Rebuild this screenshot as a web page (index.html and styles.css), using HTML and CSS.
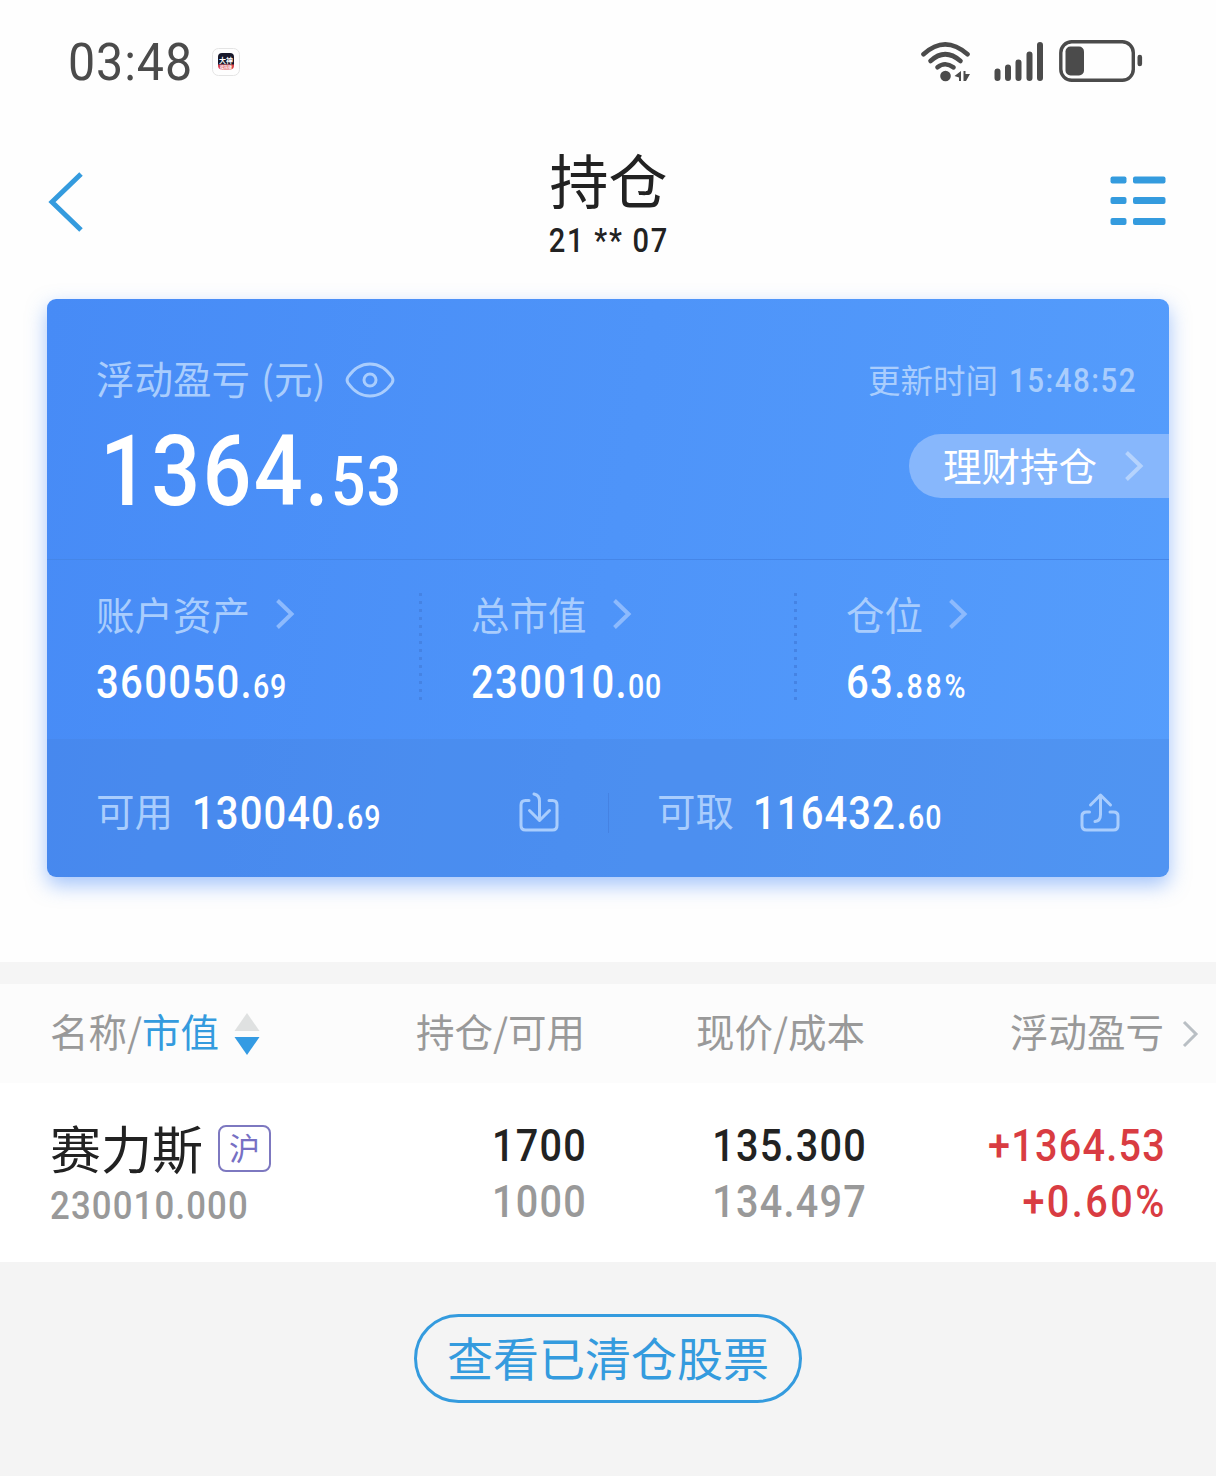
FILE: index.html
```html
<!DOCTYPE html>
<html lang="zh-CN">
<head>
<meta charset="UTF-8">
<title>持仓</title>
<link rel="stylesheet" href="styles.css">
</head>
<body>
	<div class="statusbar">
		<span class="time num">03:48</span>
		<svg class="app-icon" width="28" height="28" viewBox="0 0 28 28">
			<rect x="0.5" y="0.5" width="27" height="27" rx="6" fill="#fefefe" stroke="#e4e4e4"/>
			<path d="M6 17V9q0-4 4-4h8q4 0 4 4v8z" fill="#17182b"/>
			<path d="M6 16.500h16v1q0 4-4 4h-8q-4 0-4-4z" fill="#d8404c"/>
			<text x="14" y="14.500" class="app-name">大神</text>
			<text x="14" y="20.500" class="app-tag">模拟版</text>
		</svg>
		<svg class="wifi" width="52" height="42" viewBox="0 0 52 42">
			<g fill="none" stroke="#4b4b4b" stroke-width="4.600" stroke-linecap="round">
				<path d="M3.500 13.300Q25 -6.500 47.500 13.300"/>
				<path d="M10.500 20Q25 6.500 40.500 20"/>
				<path d="M17.500 26.300Q25 20.200 33.500 26.300"/>
			</g>
			<circle cx="25.500" cy="35" r="5.300" fill="#4b4b4b"/>
			<path d="M41 30v10h-2v-3.500l-4.500-1.500zM43.500 30h2v3h4.500l-4 7h-2.500z" fill="#4b4b4b"/>
		</svg>
		<svg class="signal" width="50" height="40" viewBox="0 0 50 40">
			<g stroke="#4b4b4b" stroke-width="6" stroke-linecap="round">
				<path d="M3.500 29.500v6.500M14 25.500V36M24.500 20.500V36M35.500 12.500V36M46 3v33"/>
			</g>
		</svg>
		<svg class="battery" width="84" height="44" viewBox="0 0 84 44">
			<rect x="1.800" y="1.800" width="72.500" height="38.500" rx="11" fill="none" stroke="#4b4b4b" stroke-width="3.400"/>
			<rect x="6.500" y="6.500" width="18.500" height="29" rx="5" fill="#4b4b4b"/>
			<path d="M80.800 17v7" stroke="#4b4b4b" stroke-width="4.600" stroke-linecap="round"/>
		</svg>
	</div>

	<div class="header">
		<svg class="back" width="38" height="62" viewBox="0 0 38 62">
			<path d="M34 3L5 31l29 28" fill="none" stroke="#349bde" stroke-width="5"/>
		</svg>
		<div class="title">
			<div class="title-main">持仓</div>
			<div class="title-sub num">21 ** 07</div>
		</div>
		<svg class="list" width="56" height="50" viewBox="0 0 56 50" fill="#349bde">
			<rect x="0.500" y="0.500" width="16" height="7" rx="2"/>
			<rect x="23" y="0.500" width="32.500" height="7" rx="2"/>
			<rect x="0.500" y="21" width="16" height="7" rx="2"/>
			<rect x="23" y="21" width="32.500" height="7" rx="2"/>
			<rect x="0.500" y="42" width="16" height="7" rx="2"/>
			<rect x="23" y="42" width="32.500" height="7" rx="2"/>
		</svg>
	</div>

	<div class="card">
		<div class="profit">
			<div class="profit-head">
				<span class="label">浮动盈亏<span class="unit">(元)</span></span>
				<svg class="eye" width="50" height="38" viewBox="0 0 50 38" fill="none" stroke="currentColor" stroke-width="3">
					<path d="M3 22Q1.200 19 3 16Q12 3 25 3T47 16Q48.800 19 47 22Q38 35 25 35T3 22z"/>
					<circle cx="25" cy="19" r="6"/>
				</svg>
				<span class="update">更新时间</span>
				<span class="clock num">15:48:52</span>
			</div>
			<div class="profit-body">
				<div class="total num">1364.<small>53</small></div>
				<div class="wealth">理财持仓
					<svg class="arrow" width="20" height="32" viewBox="0 0 20 32"><path d="M2.500 2.500L16.500 16l-14 13.500"/></svg>
				</div>
			</div>
		</div>
		<div class="assets">
			<div class="asset">
				<div class="label">账户资产<svg class="arrow" width="20" height="32" viewBox="0 0 20 32"><path d="M2.500 2.500L16.500 16l-14 13.500"/></svg></div>
				<div class="amount num">360050.<small>69</small></div>
			</div>
			<div class="asset">
				<div class="label">总市值<svg class="arrow" width="20" height="32" viewBox="0 0 20 32"><path d="M2.500 2.500L16.500 16l-14 13.500"/></svg></div>
				<div class="amount num">230010.<small>00</small></div>
			</div>
			<div class="asset">
				<div class="label">仓位<svg class="arrow" width="20" height="32" viewBox="0 0 20 32"><path d="M2.500 2.500L16.500 16l-14 13.500"/></svg></div>
				<div class="amount num">63.<small class="percent">88%</small></div>
			</div>
		</div>
		<div class="cash">
			<div class="cash-item">
				<span class="label">可用</span>
				<span class="amount num">130040.<small>69</small></span>
				<svg class="transfer" width="40" height="40" viewBox="0 0 40 40">
					<path d="M10 8.500H6.500Q2 8.500 2 13v20.500Q2 38 6.500 38h27q4.500 0 4.500-4.500V13q0-4.500-4.500-4.500H30"/>
					<path d="M15 2q5.500 1 5.500 7v19M10.500 18.500l10 10 10-10"/>
				</svg>
			</div>
			<div class="cash-item">
				<span class="label">可取</span>
				<span class="amount num">116432.<small>60</small></span>
				<svg class="transfer" width="40" height="40" viewBox="0 0 40 40">
					<path d="M9.500 20H6.500Q2 20 2 24v9.500Q2 38 6.500 38h27q4.500 0 4.500-4.500V24q0-4-4.500-4H30"/>
					<path d="M15 29.500q5.500-.5 5.500-7V3M10.500 13l10-10 10 10"/>
				</svg>
			</div>
		</div>
	</div>

	<div class="stocks">
		<div class="row row-head">
			<div class="col-name">名称/<span class="active">市值</span>
				<svg class="sort" width="26" height="42" viewBox="0 0 26 42">
					<path d="M13 0l12.500 18H.5z" fill="#dfe1e1"/>
					<path d="M13 42L.5 24h25z" fill="#349be3"/>
				</svg>
			</div>
			<div>持仓/可用</div>
			<div>现价/成本</div>
			<div>浮动盈亏</div>
			<svg class="more" width="18" height="28" viewBox="0 0 18 28"><path d="M2 2l12 12L2 26" fill="none" stroke="#b9bfc4" stroke-width="3"/></svg>
		</div>
		<div class="row row-stock">
			<div class="col-name">
				<div class="stock-name">赛力斯<span class="market">沪</span></div>
				<div class="stock-value num">230010.000</div>
			</div>
			<div class="pair num">1700<br><span class="sub">1000</span></div>
			<div class="pair num">135.300<br><span class="sub">134.497</span></div>
			<div class="pair num up">+1364.53<br><span class="percent">+0.60%</span></div>
		</div>
	</div>

	<div class="footer">
		<div class="cleared">查看已清仓股票</div>
	</div>
</body>
</html>
```
FILE: styles.css
```css
*{
	box-sizing: border-box;
}

body{
	margin: 0;
	width: 1216px;
	min-height: 1476px;
	background: #fefefe;
	color: #222;
	font-family: "Noto Sans CJK SC", sans-serif;
	display: flex;
	flex-direction: column;
}

svg{
	display: block;
	flex: none;
}

/* narrow digits */
.num{
	font-family: Roboto, "Noto Sans CJK SC", sans-serif;
	font-weight: 500;
	letter-spacing: 0.03em;
	white-space: nowrap;
	transform: scaleX(0.88);
	transform-origin: 0 50%;
}

/* status bar */
.statusbar{
	height: 124px;
	padding: 0 73px 0 68px;
	display: flex;
	align-items: center;
}

.time{
	width: 122px;
	padding-top: 1px;
	font-size: 52px;
	font-weight: 400;
	line-height: 60px;
	color: #4b4b4b;
	letter-spacing: 1px;
	transform: scaleX(0.93);
}

.app-icon{
	margin-left: 22px;
}

.app-name, .app-tag{
	fill: #fff;
	font-size: 7px;
	font-weight: 700;
	text-anchor: middle;
}

.app-tag{
	font-size: 4px;
}

.wifi{
	margin-left: auto;
}

.signal{
	margin-left: 22px;
}

.battery{
	margin-left: 15px;
}

/* page header */
.header{
	height: 175px;
	padding: 0 50px 0 47px;
	display: flex;
	justify-content: space-between;
}

.back{
	margin-top: 47px;
}

.title{
	width: 160px;
	margin-left: 22px;
	padding-top: 21px;
	text-align: center;
}

.title-main{
	font-size: 59px;
	line-height: 68px;
}

.title-sub{
	margin-top: 8px;
	font-size: 33px;
	line-height: 40px;
	letter-spacing: 2px;
	transform-origin: 50% 50%;
}

.list{
	margin-top: 52px;
}

/* blue card */
.card{
	height: 578px;
	margin: 0 47px;
	border-radius: 9px;
	overflow: hidden;
	background: linear-gradient(100deg, #478bf6, #559dfc);
	box-shadow: 0 8px 20px rgba(74, 140, 250, 0.5);
	color: #fff;
}

.label{
	color: #a9cdfd;
	font-size: 38.500px;
	line-height: 50px;
}

.arrow{
	fill: none;
	stroke: #8dbafd;
	stroke-width: 4;
}

.profit{
	height: 260px;
	padding: 54px 0 0 49px;
}

.profit-head{
	height: 54px;
	display: flex;
	align-items: center;
	color: #a9cdfd;
}

.profit-head .label{
	margin-top: -6px;
}

.unit{
	margin-left: 11px;
}

.eye{
	margin-left: 19px;
}

.update{
	margin: -2px 0 0 auto;
	font-size: 32.500px;
	line-height: 40px;
}

.clock{
	width: 126px;
	margin: 0 34px 0 11px;
	font-size: 33.500px;
	letter-spacing: 1.700px;
}

.profit-body{
	display: flex;
	justify-content: space-between;
}

.total{
	margin: 10px 0 0 4px;
	font-size: 98px;
	line-height: 110px;
	letter-spacing: 2.500px;
}

.total small{
	font-size: 69px;
	letter-spacing: 1.500px;
}

.wealth{
	width: 260px;
	height: 64px;
	margin-top: 27px;
	padding: 0 25px 5px 34px;
	border-radius: 32px 0 0 32px;
	background: #87b7fc;
	display: flex;
	align-items: center;
	justify-content: space-between;
	font-size: 38.500px;
}

.wealth .arrow{
	margin-top: 4px;
	stroke: #b5d3fd;
}

.assets{
	height: 180px;
	border-top: 1px solid #4586e8;
	display: grid;
	grid-template-columns: repeat(3, 375px);
}

.asset{
	padding: 28px 0 0 49px;
}

.asset .label{
	display: flex;
	align-items: center;
}

.asset .arrow{
	margin: 2px 0 0 25px;
}

.asset + .asset{
	position: relative;
}

/* dotted divider between the columns */
.asset + .asset::before{
	content: "";
	position: absolute;
	left: -3px;
	top: 33px;
	width: 3px;
	height: 112px;
	background: repeating-linear-gradient(#4583e4 0 3px, transparent 3px 8px);
}

.amount{
	font-size: 45.500px;
	line-height: 54px;
	letter-spacing: 1.500px;
}

.amount small{
	font-size: 32.500px;
	letter-spacing: 1px;
}

.amount .percent{
	letter-spacing: 3px;
}

.asset .amount{
	margin-top: 18px;
}

.cash{
	height: 138px;
	padding-top: 42px;
	background: rgba(70, 130, 220, 0.3);
	display: grid;
	grid-template-columns: 561px 561px;
}

.cash-item{
	height: 60px;
	padding: 0 49px;
	display: flex;
	align-items: center;
}

.cash-item + .cash-item{
	background: linear-gradient(#4582e2, #4582e2) 0 12px / 1px 40px no-repeat;
}

.cash-item .label{
	margin-top: -4px;
}

.cash-item .amount{
	margin-left: 19px;
	padding-top: 9px;
	letter-spacing: 1.200px;
}

.transfer{
	margin: 2px 0 0 auto;
	fill: none;
	stroke: #a9cdfd;
	stroke-width: 3;
	stroke-linejoin: round;
	stroke-linecap: round;
}

/* stock list */
.stocks{
	margin-top: 85px;
	border-top: 22px solid #f5f5f5;
}

.row{
	display: grid;
	grid-template-columns: 300px 235px 280px 299px 1fr;
	padding-left: 50px;
	text-align: right;
}

.row-head{
	height: 99px;
	background: #fcfcfc;
	color: #999;
	font-size: 38.500px;
	line-height: 93px;
}

.col-name{
	text-align: left;
}

.row-head .col-name{
	display: flex;
}

.active{
	color: #349bde;
}

.sort{
	margin: 29px 0 0 15px;
}

.more{
	margin: 36px 0 0 18px;
}

.row-stock{
	height: 179px;
	background: #fff;
}

.stock-name{
	height: 60px;
	margin-top: 34px;
	display: flex;
	align-items: center;
	font-size: 51px;
	line-height: 60px;
}

.market{
	width: 53px;
	height: 47px;
	margin: 3px 0 0 15px;
	border: 2px solid #7d78c0;
	border-radius: 8px;
	color: #7770c4;
	font-size: 31px;
	line-height: 39px;
	text-align: center;
}

.stock-value{
	margin-top: 5px;
	color: #999;
	font-size: 39.500px;
	line-height: 48px;
	letter-spacing: 1.300px;
}

.pair{
	padding-top: 35px;
	margin-right: -2px;
	font-size: 45px;
	line-height: 56px;
	letter-spacing: 1.400px;
	transform-origin: 100% 50%;
}

.pair .percent{
	letter-spacing: 2.800px;
	margin-right: -1px;
}

.sub{
	color: #999;
}

.up{
	color: #d93c42;
}

.footer{
	flex: 1;
	padding-top: 52px;
	background: #f4f4f4;
}

.cleared{
	width: 388px;
	height: 89px;
	margin: 0 auto;
	border: 3px solid #349bde;
	border-radius: 45px;
	color: #349bde;
	font-size: 46px;
	line-height: 79px;
	text-align: center;
}
```
